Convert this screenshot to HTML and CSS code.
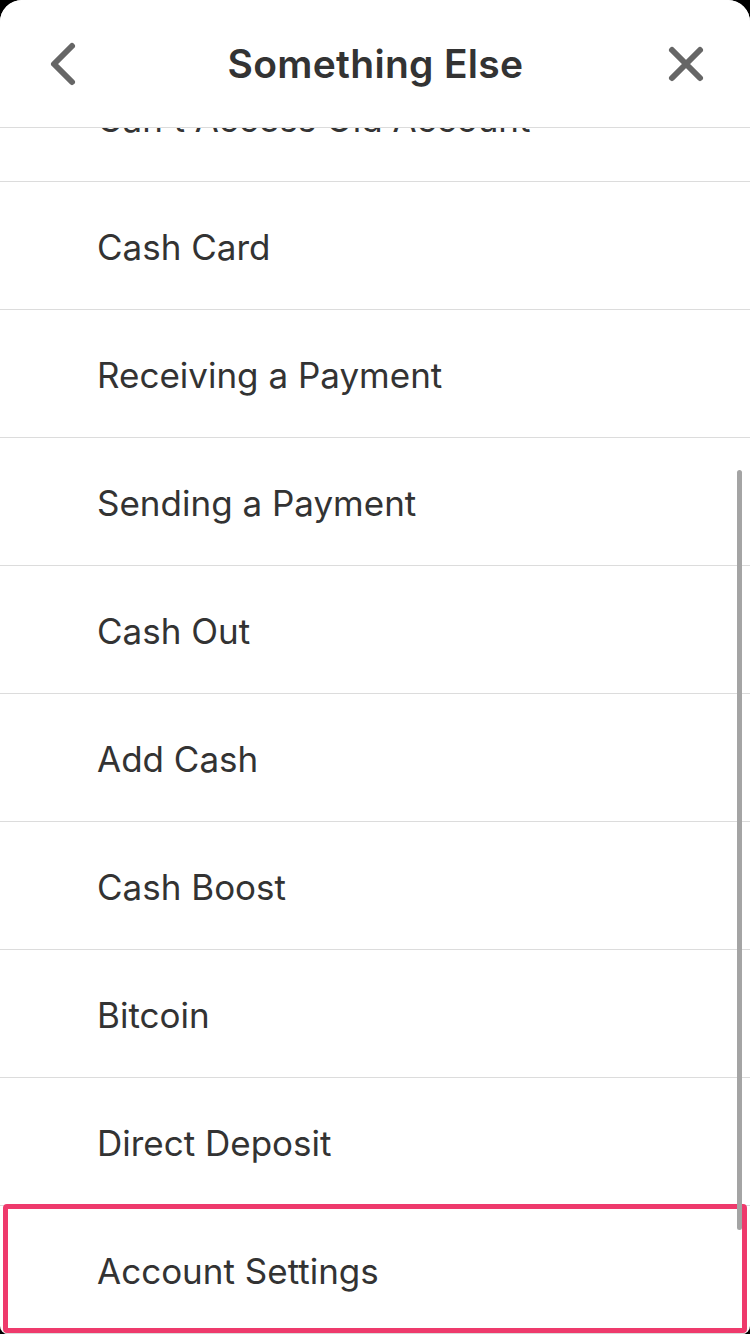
FILE: index.html
```html
<!DOCTYPE html>
<html>
<head>
<meta charset="UTF-8">
<meta name="viewport" content="width=device-width, initial-scale=1">
<link rel="stylesheet" href="styles.css">
</head>
<body>

<div class="sheet">
  <div class="topbar">
    <a class="icon-btn" aria-label="Back">
      <svg width="40" height="50" viewBox="0 0 40 50">
        <path d="M28 9 L10 27 L28 45" fill="none" stroke="#666" stroke-width="6" stroke-linecap="round" stroke-linejoin="round"/>
      </svg>
    </a>
    <h1 class="title">Something Else</h1>
    <a class="icon-btn close" aria-label="Close">
      <svg width="40" height="50" viewBox="0 0 40 50">
        <path d="M5 10 L33 38 M33 10 L5 38" fill="none" stroke="#666" stroke-width="6" stroke-linecap="round"/>
      </svg>
    </a>
  </div>

  <div class="list-wrap">
    <div class="list">
      <a class="row">Can't Access Old Account</a>
      <a class="row">Cash Card</a>
      <a class="row">Receiving a Payment</a>
      <a class="row">Sending a Payment</a>
      <a class="row">Cash Out</a>
      <a class="row">Add Cash</a>
      <a class="row">Cash Boost</a>
      <a class="row">Bitcoin</a>
      <a class="row">Direct Deposit</a>
      <a class="row selected">Account Settings</a>
    </div>
    <div class="scrollbar"></div>
  </div>
</div>

</body>
</html>
```

FILE: styles.css
```css
html, body {
  margin: 0;
  padding: 0;
  background: #000;
}

body {
  width: 750px;
  height: 1334px;
  overflow: hidden;
  font-family: Inter, "Open Sans", sans-serif;
  color: #333;
}

.sheet {
  height: 1334px;
  background: #fff;
  border-radius: 22px 22px 8px 8px;
  display: flex;
  flex-direction: column;
  overflow: hidden;
}

.topbar {
  height: 127px;
  flex-shrink: 0;
  display: flex;
  align-items: center;
  justify-content: space-between;
  padding: 0 43px 0 44px;
  border-bottom: 1px solid #dcdcdc;
  background: #fff;
  position: relative;
  z-index: 2;
}

.icon-btn {
  display: flex;
  width: 40px;
  height: 50px;
  margin-top: -3px;
}

.icon-btn.close {
  margin-top: 3px;
}

.title {
  margin: 0;
  font-size: 39px;
  font-weight: 600;
  letter-spacing: 0.3px;
  color: #333;
  margin-top: -1px;
}

.list-wrap {
  flex: 1;
  position: relative;
  overflow: hidden;
}

.list {
  margin-top: -74px;
}

.row {
  display: flex;
  align-items: center;
  height: 127px;
  padding: 2px 0 0 97px;
  box-sizing: border-box;
  height: 128px;
  border-bottom: 1px solid #dcdcdc;
  font-size: 35px;
  color: #333;
  position: relative;
}

.selected::after {
  content: "";
  position: absolute;
  top: -2px;
  left: 3px;
  right: 3px;
  bottom: 0;
  border: 5px solid #ee3a6c;
  border-radius: 4px;
}

.scrollbar {
  position: absolute;
  top: 342px;
  right: 8px;
  width: 5px;
  height: 760px;
  background: #a4a4a4;
  border-radius: 3px;
}
```
